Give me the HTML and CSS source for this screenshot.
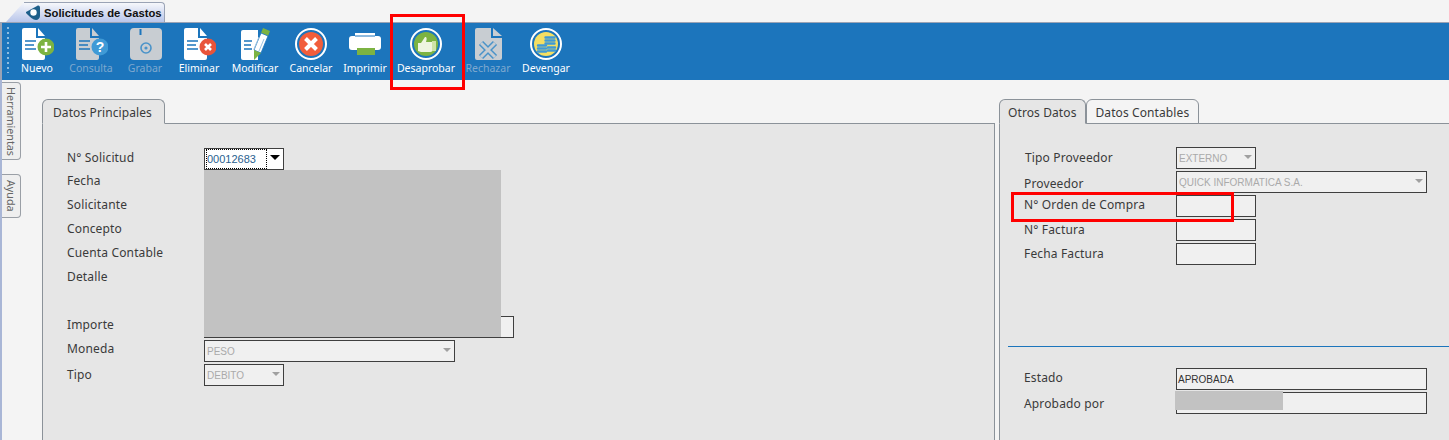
FILE: index.html
```html
<!DOCTYPE html>
<html>
<head>
  <meta charset="utf-8"/>
  <title>Solicitudes de Gastos</title>
  <link rel="stylesheet" href="styles.css">
</head>
<body>
  <!-- Window tab -->
  <div class="tabstrip">
    <div class="win-tab">
      <svg class="win-logo" width="16" height="16" viewBox="0 0 16 16"><path d="M1 7 12 1c2-1 3 0 3 2v8c0 2-2 4-4 4-3 0-6-3-10-7z" fill="#1d5f8a"/><circle cx="8.500" cy="7.500" r="3.200" fill="#fff"/></svg>
      <span>Solicitudes de Gastos</span>
    </div>
  </div>

  <!-- Toolbar -->
  <div class="toolbar">
    <div class="grip"></div>
    <div class="tool">
      <svg width="34" height="36" viewBox="0 0 34 36"><path d="M4 2h12v10h9v20a2 2 0 0 1-2 2H4a2 2 0 0 1-2-2V4a2 2 0 0 1 2-2z" fill="#fff"/><path d="M18 2l7 8h-7z" fill="#fff"/><path d="M5 15h11M5 19h9M5 23h11" stroke="#1c75bc" stroke-width="1.600"/><circle cx="26" cy="21" r="8.500" fill="#7cb342"/><path d="M26 16v10M21 21h10" stroke="#fff" stroke-width="2.600"/></svg>
      <span>Nuevo</span>
    </div>
    <div class="tool off">
      <svg width="34" height="36" viewBox="0 0 34 36"><path d="M4 2h12v10h9v20a2 2 0 0 1-2 2H4a2 2 0 0 1-2-2V4a2 2 0 0 1 2-2z" fill="#c8cdd2"/><path d="M18 2l7 8h-7z" fill="#c8cdd2"/><path d="M5 15h11M5 19h9M5 23h11" stroke="#1c75bc" stroke-width="1.600"/><circle cx="26" cy="21" r="8.500" fill="#3f9ad6"/><text x="26" y="26" class="qmark">?</text></svg>
      <span>Consulta</span>
    </div>
    <div class="tool off">
      <svg width="34" height="36" viewBox="0 0 34 36"><rect x="2" y="2" width="32" height="32" rx="4" fill="#c8cdd2"/><path d="M12.500 3v6" stroke="#1c75bc" stroke-width="2"/><circle cx="18" cy="22" r="5" fill="none" stroke="#4a93c9" stroke-width="1.600"/><circle cx="18" cy="22" r="1.600" fill="#4a93c9"/></svg>
      <span>Grabar</span>
    </div>
    <div class="tool">
      <svg width="34" height="36" viewBox="0 0 34 36"><path d="M4 2h12v10h9v20a2 2 0 0 1-2 2H4a2 2 0 0 1-2-2V4a2 2 0 0 1 2-2z" fill="#fff"/><path d="M18 2l7 8h-7z" fill="#fff"/><path d="M5 15h11M5 19h9M5 23h11" stroke="#1c75bc" stroke-width="1.600"/><circle cx="26" cy="21" r="8.500" fill="#e8543a"/><path d="M23 18l6 6M29 18l-6 6" stroke="#fff" stroke-width="2.600"/></svg>
      <span>Eliminar</span>
    </div>
    <div class="tool">
      <svg width="34" height="36" viewBox="0 0 34 36"><path d="M5 4h15v30H5a2 2 0 0 1-2-2V6a2 2 0 0 1 2-2z" fill="#fff"/><path d="M6 15h8M6 19h7M6 23h8" stroke="#1c75bc" stroke-width="1.600"/><path d="M25 2l7 3-2 5-7-3z" fill="#7cb342"/><path d="M23 7l7 3-7 17-7-3z" fill="#fff" stroke="#1c75bc" stroke-width=".8"/><path d="M21 11l-5 12M26 13l-5 12" stroke="#9cc3e2" stroke-width="1"/><path d="M16 24l7 3-7 7z" fill="#7cb342"/></svg>
      <span>Modificar</span>
    </div>
    <div class="tool">
      <svg width="34" height="36" viewBox="0 0 34 36"><circle cx="17" cy="18" r="15" fill="#1c75bc" stroke="#fff" stroke-width="2"/><circle cx="17" cy="18" r="12" fill="#f15d3b"/><path d="M11.500 12.500l11 11M22.500 12.500l-11 11" stroke="#fff" stroke-width="4"/></svg>
      <span>Cancelar</span>
    </div>
    <div class="tool">
      <svg width="34" height="36" viewBox="0 0 34 36"><path d="M7 7h20v4H7z" fill="#fff"/><rect x="1" y="10" width="32" height="14" rx="3" fill="#fff"/><path d="M9 22h18v7H9z" fill="#7cb342"/><path d="M7 10h20" stroke="#1c75bc" stroke-width="1"/></svg>
      <span>Imprimir</span>
    </div>
    <div class="tool">
      <svg width="34" height="36" viewBox="0 0 34 36"><circle cx="17" cy="18" r="15" fill="#1c75bc" stroke="#fff" stroke-width="2"/><circle cx="17" cy="18" r="12" fill="#7cb342"/><path d="M9 17h3l4-6c2 0 2 2 1 5h6c2 0 2 2 1 3v5c-1 2-2 2-4 2h-8l-3-1z" fill="#eef5e0"/><path d="M23 15h4v10h-4z" fill="#cfe3a8"/></svg>
      <span>Desaprobar</span>
    </div>
    <div class="tool off">
      <svg width="34" height="36" viewBox="0 0 34 36"><path d="M6 2h14v10h11v20a2 2 0 0 1-2 2H6a2 2 0 0 1-2-2V4a2 2 0 0 1 2-2z" fill="#c8cdd2"/><path d="M22 2l9 8h-9z" fill="#c8cdd2"/><path d="M10 17l14 14M24 17 10 31" stroke="#4a93c9" stroke-width="6"/><path d="M10 17l14 14M24 17 10 31" stroke="#c8cdd2" stroke-width="3"/></svg>
      <span>Rechazar</span>
    </div>
    <div class="tool">
      <svg width="34" height="36" viewBox="0 0 34 36"><circle cx="17" cy="18" r="15" fill="#1c75bc" stroke="#fff" stroke-width="2"/><circle cx="17" cy="18" r="12" fill="#f4df63"/><path d="M16.500 11.500h9M16.500 14.500h9M16.500 17.500h9" stroke="#3f9ad6" stroke-width="2.400" stroke-linecap="round"/><path d="M9 19.500h8M9 22.500h8M9 25.500h8M19 21.500h7M19 24.500h7" stroke="#3f9ad6" stroke-width="2.400" stroke-linecap="round"/></svg>
      <span>Devengar</span>
    </div>
  </div>

  <div class="main">
    <!-- Side tabs -->
    <div class="side">
      <div class="side-tab side-herr">Herramientas</div>
      <div class="side-tab side-ayuda">Ayuda</div>
    </div>

    <!-- Datos Principales -->
    <div class="pane pane-left">
      <div class="tabs">
        <div class="tab active wide-left">Datos Principales</div>
      </div>
      <div class="panel form-left">
        <div class="row"><label class="lab-first">N° Solicitud</label>
          <div class="ctl combo w80"><span class="focus">00012683</span><i class="arrow"></i></div>
        </div>
        <div class="row"><label>Fecha</label></div>
        <div class="row"><label>Solicitante</label></div>
        <div class="row"><label>Concepto</label></div>
        <div class="row"><label>Cuenta Contable</label></div>
        <div class="row"><label>Detalle</label></div>
        <div class="row"></div>
        <div class="row"><label>Importe</label><div class="ctl w310"></div></div>
        <div class="row"><label>Moneda</label>
          <div class="ctl combo off w251"><span>PESO</span><i class="arrow"></i></div>
        </div>
        <div class="row"><label class="low">Tipo</label>
          <div class="ctl combo off w80"><span>DEBITO</span><i class="arrow"></i></div>
        </div>
        <div class="redact redact-main"></div>
      </div>
    </div>

    <!-- Otros Datos -->
    <div class="pane pane-right">
      <div class="tabs">
        <div class="tab active">Otros Datos</div>
        <div class="tab">Datos Contables</div>
      </div>
      <div class="panel form-right">
        <div class="row"><label class="lab-tipo">Tipo Proveedor</label>
          <div class="ctl combo off w80"><span>EXTERNO</span><i class="arrow"></i></div>
        </div>
        <div class="row"><label class="low">Proveedor</label>
          <div class="ctl combo off w251"><span>QUICK INFORMATICA S.A.</span><i class="arrow"></i></div>
        </div>
        <div class="row"><label class="lab-orden">N° Orden de Compra</label><div class="ctl w80"></div></div>
        <div class="row"><label>N° Factura</label><div class="ctl w80"></div></div>
        <div class="row"><label>Fecha Factura</label><div class="ctl w80"></div></div>

        <div class="divider"></div>

        <div class="row"><label class="lab-orden">Estado</label><div class="ctl w251 value"><span>APROBADA</span></div></div>
        <div class="row"><label class="lab-aprobado">Aprobado por</label><div class="ctl w251"></div></div>
        <div class="redact redact-user"></div>
      </div>
    </div>
  </div>

  <!-- Callouts drawn over the screen -->
  <div class="callout callout-btn"></div>
  <div class="callout callout-field"></div>
</body>
</html>
```

FILE: styles.css
```css
html, body {
  margin: 0;
  height: 440px;
  overflow: hidden;
}
body {
  position: relative;
  background: #f4f4f4;
  font-family: "Noto Sans", sans-serif;
  font-size: 12px;
  color: #3a3a3a;
}

/* window tab */
.tabstrip {
  height: 22px;
  padding: 2px 0 0 24px;
  box-sizing: border-box;
}
.win-tab {
  position: relative;
  display: flex;
  align-items: center;
  gap: 3px;
  width: 141px;
  height: 20px;
  padding-left: 1px;
  box-sizing: border-box;
  background: linear-gradient(#f6f7fb, #b9c6ea);
  border: 1px solid #9aa3b5;
  border-left: none;
  border-bottom: none;
  border-radius: 0 4px 0 0;
  font-family: "Liberation Sans", sans-serif;
  font-size: 11.25px;
  font-weight: bold;
  color: #111;
  white-space: nowrap;
}
.win-tab::before {
  content: "";
  position: absolute;
  left: -18px;
  top: -1px;
  width: 18px;
  height: 20px;
  background: linear-gradient(#f6f7fb, #b9c6ea);
  clip-path: polygon(100% 0, 100% 100%, 0 100%);
}
.win-logo {
  flex: none;
}

/* toolbar */
.toolbar {
  display: grid;
  grid-template-columns: 8px 54px 54px 54px 54px 58px 54px 54px 68px 56px 60px;
  height: 57px;
  background: #1c75bc;
  border-top: 1px solid #9aa3b5;
  border-left: 2px solid #9aa3b5;
}
.grip {
  margin: 4px 0 0 5px;
  width: 2px;
  height: 46px;
  background: repeating-linear-gradient(#8fbde0 0 2px, transparent 2px 5px);
}
.tool {
  display: flex;
  flex-direction: column;
  align-items: center;
  padding-top: 3px;
  color: #fff;
  font-size: 10.5px;
  line-height: 12px;
  white-space: nowrap;
}
.tool svg {
  display: block;
}
.tool.off {
  color: #7fa9cf;
}
.qmark {
  font-family: "Liberation Sans", sans-serif;
  font-size: 14px;
  font-weight: bold;
  text-anchor: middle;
  fill: #fff;
}

/* main area */
.main {
  display: flex;
  height: 360px;
  border-left: 2px solid #a9b6d6;
}
.side {
  width: 40px;
  padding-top: 2px;
  flex: none;
}
.side-tab {
  width: 18px;
  writing-mode: vertical-rl;
  text-align: center;
  background: #efefef;
  border: 1px solid #9a9fa6;
  border-left: none;
  border-radius: 0 4px 4px 0;
  font-size: 10.7px;
  line-height: 18px;
  color: #666;
}
.side-herr {
  height: 76px;
}
.side-ayuda {
  height: 42px;
  margin-top: 14px;
}

.pane {
  padding-top: 19px;
  box-sizing: border-box;
}
.pane-left {
  width: 953px;
  flex: none;
}
.pane-right {
  margin-left: 4px;
  flex: 1;
}
.tabs {
  display: flex;
  height: 25px;
  position: relative;
  z-index: 1;
  margin-bottom: -1px;
}
.tab {
  padding: 0 9px 0 8px;
  height: 25px;
  line-height: 26px;
  box-sizing: border-box;
  background: #f4f4f4;
  border: 1px solid #8b9299;
  border-radius: 6px 6px 0 0;
  letter-spacing: 0.1px;
  white-space: nowrap;
}
.tab.active {
  background: #e6e6e6;
  border-bottom-color: #e6e6e6;
}
.tab.wide-left {
  padding: 0 12px 0 10px;
}
.panel {
  position: relative;
  height: 330px;
  background: #e6e6e6;
  border: 1px solid #8b9299;
  box-sizing: border-box;
}
.pane-right .panel {
  border-right: none;
}

/* form rows */
.row {
  display: flex;
  height: 24px;
}
label {
  display: block;
  line-height: 16px;
  letter-spacing: 0.15px;
  white-space: nowrap;
}
.form-left {
  padding: 24px 0 0 24px;
}
.form-left label {
  width: 137px;
  flex: none;
  margin-top: 1px;
}
.form-left label.lab-first {
  margin-top: 2px;
}
.form-left label.low {
  margin-top: 3px;
}
.form-right {
  padding: 23px 0 0 24px;
}
.form-right label {
  width: 152px;
  flex: none;
  margin-top: 3px;
}
.form-right label.low {
  margin-top: 5px;
}
.form-right label.lab-tipo {
  margin-left: 1px;
  width: 151px;
}
.form-right label.lab-orden {
  margin-top: 2px;
}
.form-right label.lab-aprobado {
  margin-top: 4px;
}

.ctl {
  position: relative;
  display: flex;
  align-items: center;
  height: 22px;
  box-sizing: border-box;
  background: #f0f0f0;
  border: 1px solid #3f3f3f;
  font-family: "Liberation Sans", sans-serif;
  font-size: 10px;
  padding-left: 2px;
}
.w80 { width: 80px; }
.w251 { width: 251px; }
.w310 { width: 310px; }
.ctl.value {
  padding-left: 1px;
  color: #333;
}
.combo.off {
  color: #aaa;
}
.arrow {
  position: absolute;
  right: 3px;
  top: 7px;
  border-left: 4px solid transparent;
  border-right: 4px solid transparent;
  border-top: 4px solid #a0a0a0;
}
.combo:not(.off) {
  background: #fff;
  padding-left: 1px;
}
.combo:not(.off) .arrow {
  border-left-width: 5px;
  border-right-width: 5px;
  border-top: 5px solid #000;
  top: 6px;
}
.focus {
  border: 1px dotted #000;
  height: 18px;
  line-height: 18px;
  width: 59px;
  color: #2a5f8f;
  font-size: 11px;
  white-space: nowrap;
  overflow: hidden;
}

.divider {
  height: 1px;
  margin: 79px 0 21px -16px;
  background: #1c75bc;
}

/* redacted blocks */
.redact {
  position: absolute;
  background: #c2c2c2;
}
.redact-main {
  left: 161px;
  top: 46px;
  width: 297px;
  height: 167px;
}
.redact-user {
  left: 175px;
  top: 267px;
  width: 108px;
  height: 19px;
}

/* red callouts */
.callout {
  position: absolute;
  box-sizing: border-box;
  border: 3px solid #f00;
}
.callout-btn {
  left: 390px;
  top: 14px;
  width: 75px;
  height: 76px;
}
.callout-field {
  left: 1011px;
  top: 192px;
  width: 223px;
  height: 30px;
}
```
